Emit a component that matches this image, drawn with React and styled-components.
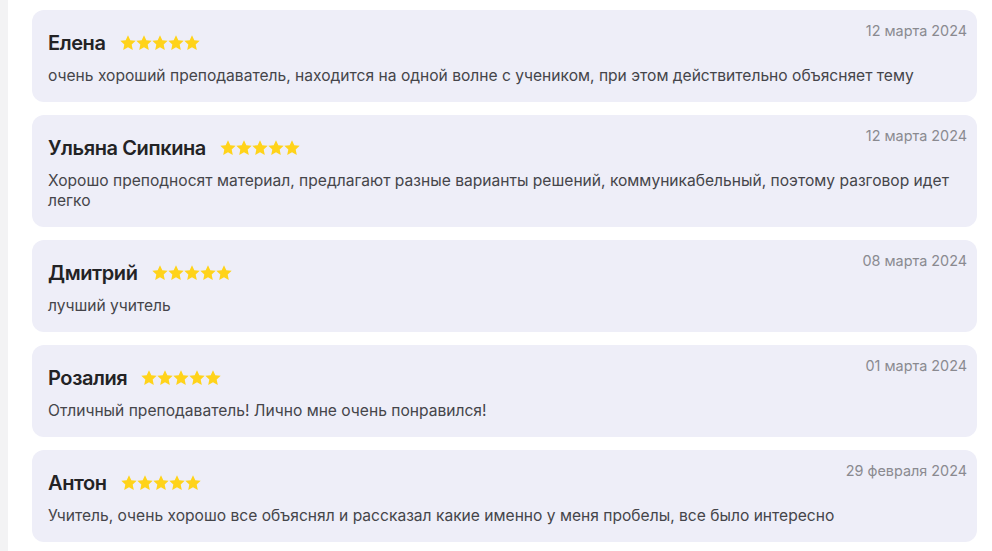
import React from 'react';
import styled, { createGlobalStyle } from 'styled-components';

const GlobalStyle = createGlobalStyle`
  body {
    margin: 0;
    background: #ffffff;
    font-family: Inter, "Noto Sans", "DejaVu Sans", sans-serif;
  }
`;

const reviews = [
  { name: 'Елена', date: '12 марта 2024', text: 'очень хороший преподаватель, находится на одной волне с учеником, при этом действительно объясняет тему' },
  { name: 'Ульяна Сипкина', date: '12 марта 2024', text: 'Хорошо преподносят материал, предлагают разные варианты решений, коммуникабельный, поэтому разговор идет легко' },
  { name: 'Дмитрий', date: '08 марта 2024', text: 'лучший учитель' },
  { name: 'Розалия', date: '01 марта 2024', text: 'Отличный преподаватель! Лично мне очень понравился!' },
  { name: 'Антон', date: '29 февраля 2024', text: 'Учитель, очень хорошо все объяснял и рассказал какие именно у меня пробелы, все было интересно' },
];

const Star = () => (
  <svg width="16" height="16" viewBox="0 0 20 20">
    <path
      fill="#ffd31a"
      d="M10 0.4l2.9 6.1 6.7 0.7-5 4.6 1.4 6.8L10 15.3l-6 3.3 1.4-6.8-5-4.6 6.7-0.7z"
    />
  </svg>
);

export default function App() {
  return (
    <>
      <GlobalStyle />
      <Page>
        <Side />
        <List>
          {reviews.map((r, i) => (
            <Card key={i}>
              <Head>
                <Who>
                  <Name>{r.name}</Name>
                  <Stars>
                    {[0, 1, 2, 3, 4].map((s) => <Star key={s} />)}
                  </Stars>
                </Who>
                <Date>{r.date}</Date>
              </Head>
              <Text>{r.text}</Text>
            </Card>
          ))}
        </List>
      </Page>
    </>
  );
}

const Page = styled.div`
  display: flex;
  min-height: 551px;
`;

const Side = styled.div`
  width: 8px;
  flex-shrink: 0;
  background: #f3f3f4;
`;

const List = styled.div`
  flex: 1;
  display: flex;
  flex-direction: column;
  gap: 13px;
  padding: 10px 15px 0 24px;
`;

const Card = styled.div`
  background: #eeeef8;
  border-radius: 12px;
  padding: 12px 10px 16px 16px;
`;

const Head = styled.div`
  display: flex;
  justify-content: space-between;
  align-items: flex-start;
`;

const Who = styled.div`
  display: flex;
  align-items: center;
  gap: 14px;
  margin-top: 9px;
`;

const Name = styled.div`
  font-size: 20px;
  font-weight: 600;
  line-height: 24px;
  color: #232325;
  letter-spacing: -0.4px;
`;

const Stars = styled.div`
  display: flex;
`;

const Date = styled.div`
  font-size: 14.4px;
  line-height: 18px;
  color: #8a8a90;
`;

const Text = styled.p`
  margin: 11px 0 0;
  font-size: 15.6px;
  line-height: 20px;
  color: #45454a;
`;
